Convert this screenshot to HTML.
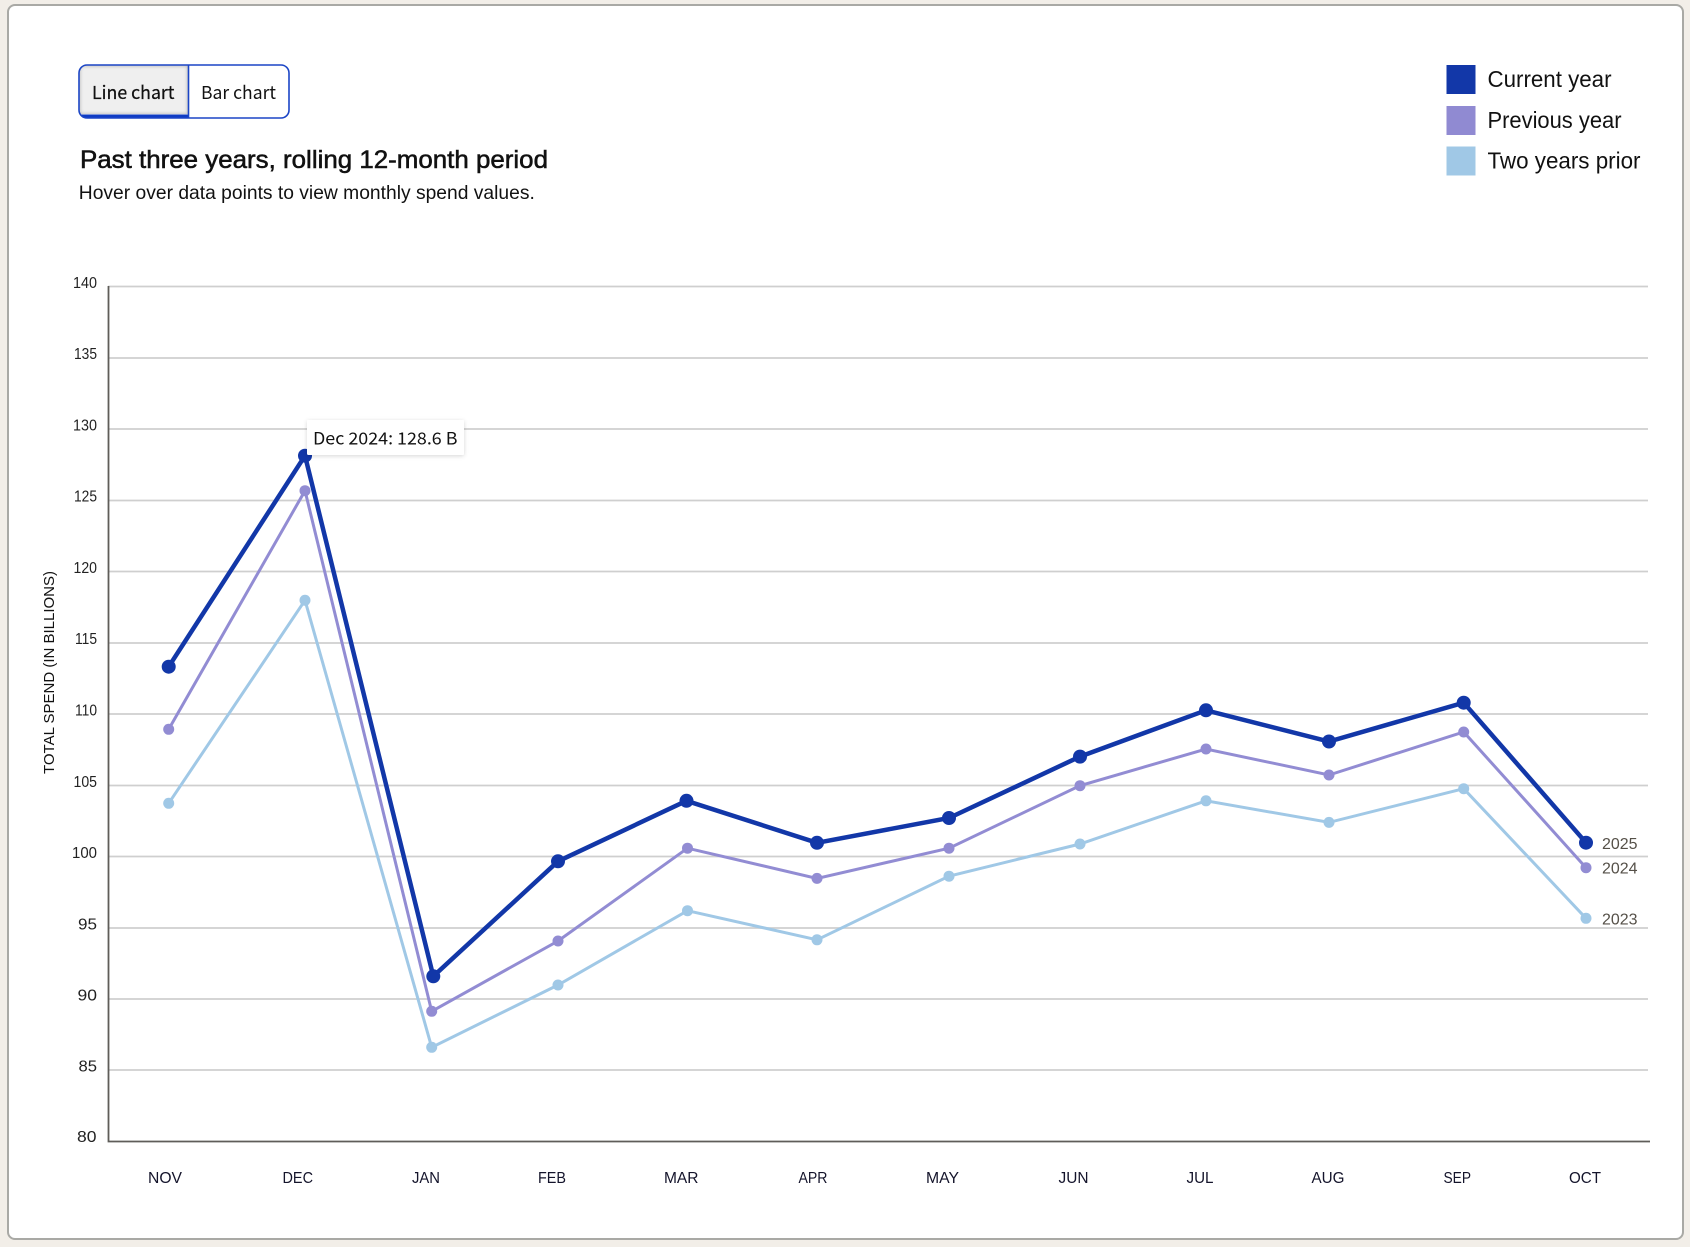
<!DOCTYPE html>
<html lang="en">
<head>
<meta charset="utf-8">
<title>Total spend chart</title>
<style>
html,body{margin:0;padding:0;width:1690px;height:1247px;overflow:hidden;background:#f2eee8}
svg{display:block;position:absolute;left:0;top:0}
text{font-family:"Liberation Sans",sans-serif;fill:#111}
.noto{font-family:"Noto Sans CJK SC","Liberation Sans",sans-serif}
.y{font-size:16px;fill:#222;text-anchor:start}
.x{font-size:16px;fill:#14142b}
.e{font-size:16px;fill:#555048}
.g{stroke:#cfcfcf;stroke-width:1.8;fill:none}
</style>
</head>
<body>
<svg width="1690" height="1247" viewBox="0 0 1690 1247" xmlns="http://www.w3.org/2000/svg">
<defs>
<filter id="s" x="-10%" y="-20%" width="120%" height="150%"><feDropShadow dx="0" dy="1" stdDeviation="2" flood-color="#000" flood-opacity=".16"/></filter>
<filter id="blur" x="-10%" y="-10%" width="120%" height="120%"><feGaussianBlur stdDeviation="1.500"/></filter>
<clipPath id="bc"><rect x="79" y="65" width="210" height="53" rx="8"/></clipPath>
<clipPath id="bl"><rect x="79" y="65" width="109.500" height="49"/></clipPath>
</defs>
<rect x="8" y="5" width="1675" height="1234" rx="7" fill="#fff" stroke="#a9a9a5" stroke-width="2"/>

<g clip-path="url(#bc)">
<rect x="79" y="65" width="110" height="53" fill="#efefef"/>
<g clip-path="url(#bl)"><rect x="79" y="65" width="109.500" height="50" fill="none" stroke="#bdbdbd" stroke-width="3" filter="url(#blur)"/></g>
<rect x="79" y="114.500" width="110" height="3.500" fill="#0f3cc4"/>
</g>
<rect x="79" y="65" width="210" height="53" rx="8" fill="none" stroke="#1b45c6" stroke-width="1.600"/>
<line x1="188.500" y1="65" x2="188.500" y2="118" stroke="#1b45c6" stroke-width="1.600"/>
<text class="noto" x="92" y="99" font-size="18" stroke="#111" stroke-width=".25" textLength="82.500" lengthAdjust="spacingAndGlyphs">Line chart</text>
<text class="noto" x="201" y="99" font-size="18" textLength="75" lengthAdjust="spacingAndGlyphs">Bar chart</text>

<text x="80" y="168" font-size="25" stroke="#111" stroke-width=".55" textLength="468" lengthAdjust="spacingAndGlyphs">Past three years, rolling 12-month period</text>
<text x="78.800" y="199" font-size="19.500" fill="#1c1c1c" textLength="456" lengthAdjust="spacingAndGlyphs">Hover over data points to view monthly spend values.</text>

<rect x="1446.500" y="65" width="29" height="29" fill="#1237a8"/>
<rect x="1446.500" y="106" width="29" height="29" fill="#908ad2"/>
<rect x="1446.500" y="146.500" width="29" height="29" fill="#a0c8e6"/>
<text x="1487.500" y="87" font-size="23" textLength="124" lengthAdjust="spacingAndGlyphs">Current year</text>
<text x="1487.500" y="128" font-size="23" textLength="134" lengthAdjust="spacingAndGlyphs">Previous year</text>
<text x="1487.500" y="168.500" font-size="23" textLength="153" lengthAdjust="spacingAndGlyphs">Two years prior</text>

<path class="g" d="M108 286.500H1648M108 358H1648M108 429H1648M108 500.500H1648M108 571.500H1648M108 643H1648M108 714H1648M108 785.500H1648M108 856.500H1648M108 928H1648M108 999H1648M108 1070H1648"/>
<path d="M108.500 286V1141.500H1650" fill="none" stroke="#5f5d59" stroke-width="1.800"/>

<g>
<text class="y" x="73" y="288" textLength="24" lengthAdjust="spacingAndGlyphs">140</text>
<text class="y" x="74" y="359" textLength="23" lengthAdjust="spacingAndGlyphs">135</text>
<text class="y" x="73" y="430.500" textLength="24" lengthAdjust="spacingAndGlyphs">130</text>
<text class="y" x="74" y="501.500" textLength="23" lengthAdjust="spacingAndGlyphs">125</text>
<text class="y" x="73.500" y="573" textLength="23.500" lengthAdjust="spacingAndGlyphs">120</text>
<text class="y" x="75" y="644" textLength="22" lengthAdjust="spacingAndGlyphs">115</text>
<text class="y" x="75" y="715.500" textLength="22" lengthAdjust="spacingAndGlyphs">110</text>
<text class="y" x="73.500" y="787" textLength="23.500" lengthAdjust="spacingAndGlyphs">105</text>
<text class="y" x="72" y="858" textLength="25" lengthAdjust="spacingAndGlyphs">100</text>
<text class="y" x="78" y="929.500" textLength="19" lengthAdjust="spacingAndGlyphs">95</text>
<text class="y" x="77.500" y="1000.500" textLength="19.500" lengthAdjust="spacingAndGlyphs">90</text>
<text class="y" x="78.500" y="1071.500" textLength="18.500" lengthAdjust="spacingAndGlyphs">85</text>
<text class="y" x="77" y="1142" textLength="19.500" lengthAdjust="spacingAndGlyphs">80</text>
</g>
<text transform="translate(54,774) rotate(-90)" font-size="15" fill="#222" textLength="203" lengthAdjust="spacingAndGlyphs">TOTAL SPEND (IN BILLIONS)</text>

<g>
<text class="x" x="148" y="1183" textLength="34" lengthAdjust="spacingAndGlyphs">NOV</text>
<text class="x" x="282.500" y="1183" textLength="30.500" lengthAdjust="spacingAndGlyphs">DEC</text>
<text class="x" x="412" y="1183" textLength="28" lengthAdjust="spacingAndGlyphs">JAN</text>
<text class="x" x="538" y="1183" textLength="28" lengthAdjust="spacingAndGlyphs">FEB</text>
<text class="x" x="664" y="1183" textLength="34.500" lengthAdjust="spacingAndGlyphs">MAR</text>
<text class="x" x="798.500" y="1183" textLength="29" lengthAdjust="spacingAndGlyphs">APR</text>
<text class="x" x="926" y="1183" textLength="33" lengthAdjust="spacingAndGlyphs">MAY</text>
<text class="x" x="1058.500" y="1183" textLength="30" lengthAdjust="spacingAndGlyphs">JUN</text>
<text class="x" x="1186.500" y="1183" textLength="27" lengthAdjust="spacingAndGlyphs">JUL</text>
<text class="x" x="1311.500" y="1183" textLength="33" lengthAdjust="spacingAndGlyphs">AUG</text>
<text class="x" x="1443.500" y="1183" textLength="27.500" lengthAdjust="spacingAndGlyphs">SEP</text>
<text class="x" x="1569" y="1183" textLength="32" lengthAdjust="spacingAndGlyphs">OCT</text>
</g>

<g fill="none" stroke-linejoin="miter">
<polyline stroke="#a0c8e6" stroke-width="3" points="168.700,803.300 305,600.300 431.700,1047.300 558,985 687.500,910.700 817,939.800 949,876.200 1080,844 1206,800.800 1329,822.400 1463.700,788.700 1586,918.300"/>
<polyline stroke="#928cd3" stroke-width="3" points="168.700,729.300 305,490.700 431.700,1011.300 558,941 687.500,848.200 817,878.400 949,848.200 1080,785.700 1206,749 1329,775 1463.700,732 1586,867.700"/>
<polyline stroke="#1237a8" stroke-width="4.500" points="168.700,666.700 305,455.700 433.300,976.300 558,861.300 686.500,800.800 817,842.800 949,818 1080,756.600 1206,710.300 1329,741.500 1463.700,702.700 1586,842.700"/>
</g>
<g fill="#a0c8e6">
<circle cx="168.700" cy="803.300" r="5.500"/><circle cx="305" cy="600.300" r="5.500"/><circle cx="431.700" cy="1047.300" r="5.500"/><circle cx="558" cy="985" r="5.500"/><circle cx="687.500" cy="910.700" r="5.500"/><circle cx="817" cy="939.800" r="5.500"/><circle cx="949" cy="876.200" r="5.500"/><circle cx="1080" cy="844" r="5.500"/><circle cx="1206" cy="800.800" r="5.500"/><circle cx="1329" cy="822.400" r="5.500"/><circle cx="1463.700" cy="788.700" r="5.500"/><circle cx="1586" cy="918.300" r="5.500"/>
</g>
<g fill="#928cd3">
<circle cx="168.700" cy="729.300" r="5.500"/><circle cx="305" cy="490.700" r="5.500"/><circle cx="431.700" cy="1011.300" r="5.500"/><circle cx="558" cy="941" r="5.500"/><circle cx="687.500" cy="848.200" r="5.500"/><circle cx="817" cy="878.400" r="5.500"/><circle cx="949" cy="848.200" r="5.500"/><circle cx="1080" cy="785.700" r="5.500"/><circle cx="1206" cy="749" r="5.500"/><circle cx="1329" cy="775" r="5.500"/><circle cx="1463.700" cy="732" r="5.500"/><circle cx="1586" cy="867.700" r="5.500"/>
</g>
<g fill="#1237a8">
<circle cx="168.700" cy="666.700" r="7"/><circle cx="305" cy="455.700" r="7"/><circle cx="433.300" cy="976.300" r="7"/><circle cx="558" cy="861.300" r="7"/><circle cx="686.500" cy="800.800" r="7"/><circle cx="817" cy="842.800" r="7"/><circle cx="949" cy="818" r="7"/><circle cx="1080" cy="756.600" r="7"/><circle cx="1206" cy="710.300" r="7"/><circle cx="1329" cy="741.500" r="7"/><circle cx="1463.700" cy="702.700" r="7"/><circle cx="1586" cy="842.700" r="7"/>
</g>

<text class="e" x="1602" y="849" textLength="35.500" lengthAdjust="spacingAndGlyphs">2025</text>
<text class="e" x="1602" y="873.500" textLength="35.500" lengthAdjust="spacingAndGlyphs">2024</text>
<text class="e" x="1602" y="924.500" textLength="35.500" lengthAdjust="spacingAndGlyphs">2023</text>

<rect x="307" y="420" width="157" height="35" rx="1.500" fill="#fff" filter="url(#s)"/>
<text class="noto" x="313" y="444.300" font-size="17" textLength="144.500" lengthAdjust="spacingAndGlyphs">Dec 2024: 128.6 B</text>
</svg>
</body>
</html>
